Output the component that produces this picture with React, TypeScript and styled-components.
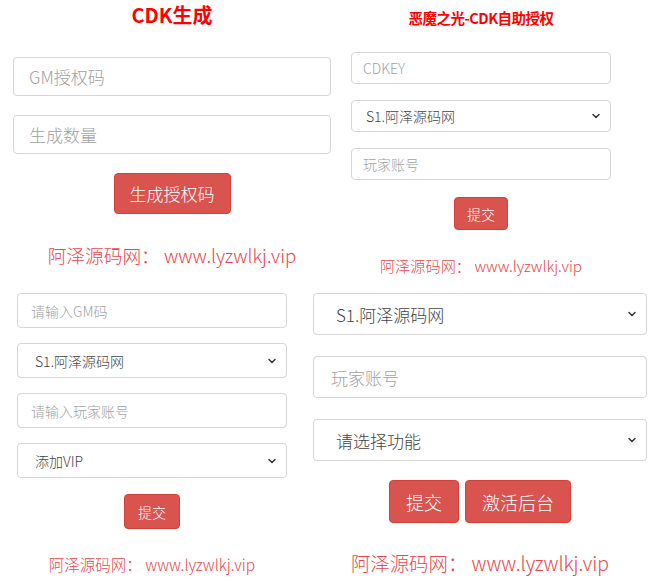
import React from 'react'
import styled, { createGlobalStyle } from 'styled-components'
import { ChevronDown } from 'lucide-react'

type Scale = {
  padTop: number
  padX: number
  titleFs: number
  titleLh: number
  titleGap: number
  titleTrack: number
  fieldH: number
  fieldGap: number
  fieldFs: number
  fieldPad: number
  selectPad: number
  btnTop: number
  btnH: number
  btnFs: number
  btnPad: number
  footTop: number
  footFs: number
  footLh: number
}

type Field = { kind: 'input' | 'select'; text: string }

const FONT = `"Noto Sans CJK SC", "Noto Sans", sans-serif`

const GlobalStyles = createGlobalStyle`
  html, body {
    margin: 0;
    padding: 0;
    background: #ffffff;
  }
  body {
    font-family: ${FONT};
  }
`

const Page = styled.div`
  width: 658px;
  height: 585px;
  overflow: hidden;
  background: #fff;
`

const Row = styled.div<{ $cols: string; $h: number }>`
  display: grid;
  grid-template-columns: ${({ $cols }) => $cols};
  height: ${({ $h }) => $h}px;
`

const Panel = styled.section<{ $s: Scale }>`
  box-sizing: border-box;
  display: flex;
  flex-direction: column;
  align-items: stretch;
  padding: ${({ $s }) => `${$s.padTop}px ${$s.padX}px 0`};
`

const Title = styled.h2<{ $s: Scale }>`
  margin: 0 0 ${({ $s }) => $s.titleGap}px;
  font-family: ${FONT};
  font-weight: 700;
  font-size: ${({ $s }) => $s.titleFs}px;
  line-height: ${({ $s }) => $s.titleLh}px;
  letter-spacing: ${({ $s }) => $s.titleTrack}px;
  color: #ff0000;
  text-align: center;
  white-space: nowrap;
`

const Form = styled.div<{ $s: Scale }>`
  display: flex;
  flex-direction: column;
  gap: ${({ $s }) => $s.fieldGap}px;
`

const TextInput = styled.input<{ $s: Scale }>`
  box-sizing: border-box;
  width: 100%;
  height: ${({ $s }) => $s.fieldH}px;
  padding: 0 ${({ $s }) => $s.fieldPad}px;
  border: 1px solid #d6d6d6;
  border-radius: 4px;
  background: #fff;
  font-family: ${FONT};
  font-weight: 300;
  font-size: ${({ $s }) => $s.fieldFs}px;
  color: #555;
  outline: none;

  &::placeholder {
    color: #a2a2a2;
  }
`

const SelectWrap = styled.div`
  position: relative;
`

const Select = styled.select<{ $s: Scale }>`
  box-sizing: border-box;
  appearance: none;
  width: 100%;
  height: ${({ $s }) => $s.fieldH}px;
  padding: 0 30px 0 ${({ $s }) => $s.selectPad}px;
  border: 1px solid #d6d6d6;
  border-radius: 4px;
  background: #fff;
  font-family: ${FONT};
  font-weight: 300;
  font-size: ${({ $s }) => $s.fieldFs}px;
  color: #444;
  outline: none;
`

const Caret = styled.span`
  position: absolute;
  right: 9px;
  top: 50%;
  transform: translateY(-50%);
  display: flex;
  color: #333;
  pointer-events: none;
`

const Buttons = styled.div<{ $s: Scale }>`
  display: flex;
  justify-content: center;
  gap: 6px;
  margin-top: ${({ $s }) => $s.btnTop}px;
`

const DangerButton = styled.button<{ $s: Scale }>`
  box-sizing: border-box;
  height: ${({ $s }) => $s.btnH}px;
  padding: 0 ${({ $s }) => $s.btnPad}px;
  border: 1px solid #d43f3a;
  border-radius: 4px;
  background: #d9534f;
  color: #fff;
  font-family: ${FONT};
  font-weight: 300;
  font-size: ${({ $s }) => $s.btnFs}px;
  line-height: 1;
  cursor: pointer;
`

const Footer = styled.p<{ $s: Scale }>`
  margin: ${({ $s }) => $s.footTop}px 0 0;
  font-family: ${FONT};
  font-weight: 300;
  font-size: ${({ $s }) => $s.footFs}px;
  line-height: ${({ $s }) => $s.footLh}px;
  color: #e9474c;
  text-align: center;
  white-space: nowrap;
`

function FormPanel({
  s,
  title,
  fields,
  buttons,
}: {
  s: Scale
  title?: string
  fields: Field[]
  buttons: string[]
}) {
  return (
    <Panel $s={s}>
      {title && <Title $s={s}>{title}</Title>}
      <Form $s={s}>
        {fields.map((f, i) =>
          f.kind === 'input' ? (
            <TextInput key={i} $s={s} placeholder={f.text} />
          ) : (
            <SelectWrap key={i}>
              <Select $s={s} defaultValue={f.text}>
                <option>{f.text}</option>
              </Select>
              <Caret>
                <ChevronDown size={12} strokeWidth={3} />
              </Caret>
            </SelectWrap>
          )
        )}
      </Form>
      <Buttons $s={s}>
        {buttons.map((b) => (
          <DangerButton key={b} $s={s}>
            {b}
          </DangerButton>
        ))}
      </Buttons>
      <Footer $s={s}>阿泽源码网： www.lyzwlkj.vip</Footer>
    </Panel>
  )
}

const topLeft: Scale = {
  padTop: 1, padX: 13, titleFs: 20, titleLh: 28, titleGap: 28, titleTrack: 0,
  fieldH: 39, fieldGap: 19, fieldFs: 17, fieldPad: 15, selectPad: 15,
  btnTop: 19, btnH: 41, btnFs: 17, btnPad: 15,
  footTop: 29, footFs: 18.7, footLh: 24,
}

const topRight: Scale = {
  padTop: 8, padX: 7, titleFs: 14.5, titleLh: 20, titleGap: 24, titleTrack: -0.5,
  fieldH: 32, fieldGap: 16, fieldFs: 14, fieldPad: 11, selectPad: 14,
  btnTop: 17, btnH: 33, btnFs: 14, btnPad: 12,
  footTop: 24, footFs: 15.2, footLh: 22,
}

const bottomLeft: Scale = {
  padTop: 13, padX: 17, titleFs: 0, titleLh: 0, titleGap: 0, titleTrack: 0,
  fieldH: 35, fieldGap: 15, fieldFs: 14, fieldPad: 13, selectPad: 17,
  btnTop: 16, btnH: 35, btnFs: 14, btnPad: 13,
  footTop: 24, footFs: 15.5, footLh: 22,
}

const bottomRight: Scale = {
  padTop: 13, padX: 9, titleFs: 0, titleLh: 0, titleGap: 0, titleTrack: 0,
  fieldH: 42, fieldGap: 21, fieldFs: 17, fieldPad: 17, selectPad: 22,
  btnTop: 19, btnH: 43, btnFs: 18, btnPad: 16,
  footTop: 27, footFs: 19.4, footLh: 26,
}

export default function App(): JSX.Element {
  return (
    <>
      <GlobalStyles />
      <Page>
        <Row $cols="344px 274px" $h={280}>
          <FormPanel
            s={topLeft}
            title="CDK生成"
            fields={[
              { kind: 'input', text: 'GM授权码' },
              { kind: 'input', text: '生成数量' },
            ]}
            buttons={['生成授权码']}
          />
          <FormPanel
            s={topRight}
            title="恶魔之光-CDK自助授权"
            fields={[
              { kind: 'input', text: 'CDKEY' },
              { kind: 'select', text: 'S1.阿泽源码网' },
              { kind: 'input', text: '玩家账号' },
            ]}
            buttons={['提交']}
          />
        </Row>
        <Row $cols="304px 352px" $h={305}>
          <FormPanel
            s={bottomLeft}
            fields={[
              { kind: 'input', text: '请输入GM码' },
              { kind: 'select', text: 'S1.阿泽源码网' },
              { kind: 'input', text: '请输入玩家账号' },
              { kind: 'select', text: '添加VIP' },
            ]}
            buttons={['提交']}
          />
          <FormPanel
            s={bottomRight}
            fields={[
              { kind: 'select', text: 'S1.阿泽源码网' },
              { kind: 'input', text: '玩家账号' },
              { kind: 'select', text: '请选择功能' },
            ]}
            buttons={['提交', '激活后台']}
          />
        </Row>
      </Page>
    </>
  )
}
